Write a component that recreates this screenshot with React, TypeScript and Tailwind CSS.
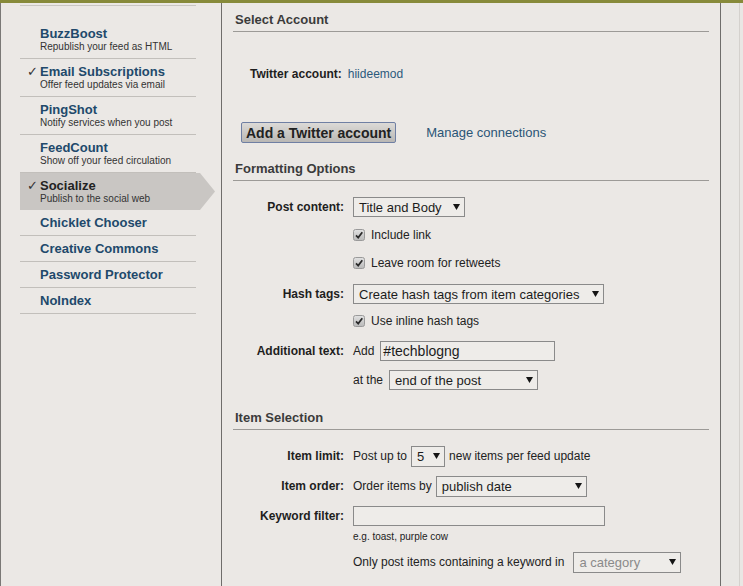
import React from "react";

const sideItems = [
  { title: "BuzzBoost", sub: "Republish your feed as HTML" },
  { title: "Email Subscriptions", sub: "Offer feed updates via email", checked: true },
  { title: "PingShot", sub: "Notify services when you post" },
  { title: "FeedCount", sub: "Show off your feed circulation" },
  { title: "Socialize", sub: "Publish to the social web", checked: true, active: true },
  { title: "Chicklet Chooser" },
  { title: "Creative Commons" },
  { title: "Password Protector" },
  { title: "NoIndex" },
];

function Arrow() {
  return (
    <svg width="7" height="6" viewBox="0 0 7 6" className="shrink-0">
      <polygon points="0,0 7,0 3.5,6" fill="#151515" />
    </svg>
  );
}

function Select({ text, className, muted }: { text: string; className: string; muted?: boolean }) {
  return (
    <div
      className={
        "flex items-center justify-between border border-[#8a8a8a] bg-[#eeece9] pl-[5px] pr-[4px] text-[13px] " +
        (muted ? "text-[#8a8a8a] " : "text-[#1c1c1c] ") +
        className
      }
    >
      <span className="leading-none">{text}</span>
      <Arrow />
    </div>
  );
}

function Checkbox({ label }: { label: string }) {
  return (
    <div className="flex items-center gap-[6px]">
      <svg width="12" height="12" viewBox="0 0 12 12">
        <defs>
          <linearGradient id="cb" x1="0" y1="0" x2="0" y2="1">
            <stop offset="0" stopColor="#e2e2e2" />
            <stop offset="1" stopColor="#b9b9b9" />
          </linearGradient>
        </defs>
        <rect x="0.5" y="0.5" width="11" height="11" rx="2" fill="url(#cb)" stroke="#9a9a9a" />
        <path d="M3 6.3 L5.2 8.6 L9.3 3.2" fill="none" stroke="#2a2a2a" strokeWidth="1.7" />
      </svg>
      <span className="text-[12px]">{label}</span>
    </div>
  );
}

function Row({ label, className, children }: { label?: string; className: string; children: React.ReactNode }) {
  return (
    <div className={"flex items-center " + className}>
      <div className="w-[122px] text-right text-[12px] font-bold text-[#1e1e1e]">{label}</div>
      <div className="ml-[9px] flex items-center">{children}</div>
    </div>
  );
}

function Heading({ text, className }: { text: string; className: string }) {
  return (
    <div className={"mx-[11px] border-b border-[#9c9a97] pb-[3px] pl-[2px] " + className}>
      <h2 className="text-[13px] font-bold leading-[16px] text-[#3b3b3b]">{text}</h2>
    </div>
  );
}

export default function App() {
  return (
    <div className="h-[586px] w-[743px] overflow-hidden bg-[#ebe8e5] font-['Liberation_Sans',Arial,sans-serif] text-[#222]">
      <div className="h-[3px] bg-[#878a3a]" />
      <div className="flex h-[583px]">
        <div className="w-[1px] bg-[#7a7876]" />

        <aside className="w-[220px] pl-[19px] pt-[2px]">
          <div className="w-[176px] border-t border-[#c9c6c2] pt-[15px]">
            {sideItems.map((it) =>
              it.active ? (
                <div
                  key={it.title}
                  className="flex w-[195px] bg-[#c9c6c3] pb-[5px] pt-[5px] [clip-path:polygon(0_0,calc(100%-15px)_0,100%_50%,calc(100%-15px)_100%,0_100%)]"
                >
                  <span className="w-[20px] pl-[7px] text-[13px] leading-[15px] text-[#333]">✓</span>
                  <div>
                    <div className="text-[13px] font-bold leading-[15px] text-[#222]">{it.title}</div>
                    <div className="text-[10px] leading-[12px] text-[#333]">{it.sub}</div>
                  </div>
                </div>
              ) : (
                <div key={it.title} className="flex border-b border-[#c2bfbb] pb-[5px] pt-[5px]">
                  <span className="w-[20px] pl-[7px] text-[13px] leading-[15px] text-[#333]">{it.checked ? "✓" : ""}</span>
                  <div>
                    <div className="text-[13px] font-bold leading-[15px] text-[#21496b]">{it.title}</div>
                    {it.sub && <div className="text-[10px] leading-[12px] text-[#333]">{it.sub}</div>}
                  </div>
                </div>
              )
            )}
          </div>
        </aside>

        <div className="w-[1px] bg-[#6f6d6b]" />

        <main className="w-[498px]">
          <Heading text="Select Account" className="pt-[9px]" />

          <div className="mt-[32px] flex h-[20px] items-center pl-[28px] text-[12px]">
            <span className="font-bold text-[#1e1e1e]">Twitter account:</span>
            <span className="ml-[6px] text-[#2b5a7c]">hiideemod</span>
          </div>

          <div className="mt-[38px] flex h-[21px] items-center pl-[19px]">
            <button className="h-[21px] rounded-[2px] border border-[#6f7fa3] bg-gradient-to-b from-[#dcdad7] to-[#b9b7b4] px-[4px] text-[14px] font-bold leading-none text-[#222]">
              Add a Twitter account
            </button>
            <span className="ml-[30px] text-[13px] text-[#2a5576]">Manage connections</span>
          </div>

          <Heading text="Formatting Options" className="pt-[18px]" />

          <Row label="Post content:" className="mt-[12px] h-[28px]">
            <Select text="Title and Body" className="h-[20px] w-[112px]" />
          </Row>
          <Row className="h-[28px]">
            <Checkbox label="Include link" />
          </Row>
          <Row className="h-[28px]">
            <Checkbox label="Leave room for retweets" />
          </Row>
          <Row label="Hash tags:" className="h-[34px]">
            <Select text="Create hash tags from item categories" className="h-[20px] w-[251px]" />
          </Row>
          <Row className="h-[20px]">
            <Checkbox label="Use inline hash tags" />
          </Row>
          <Row label="Additional text:" className="h-[40px]">
            <span className="text-[12px]">Add</span>
            <div className="ml-[6px] flex h-[20px] w-[175px] items-center border border-[#8a8a8a] bg-[#eeece9] pl-[2px] text-[14px] text-[#1c1c1c]">
              #techblogng
            </div>
          </Row>
          <Row className="h-[18px]">
            <span className="text-[12px]">at the</span>
            <Select text="end of the post" className="ml-[6px] h-[20px] w-[149px]" />
          </Row>

          <Heading text="Item Selection" className="pt-[21px]" />

          <Row label="Item limit:" className="mt-[12px] h-[28px]">
            <span className="text-[12px]">Post up to</span>
            <Select text="5" className="ml-[4px] h-[21px] w-[34px]" />
            <span className="ml-[4px] text-[12px]">new items per feed update</span>
          </Row>
          <Row label="Item order:" className="h-[32px]">
            <span className="text-[12px]">Order items by</span>
            <Select text="publish date" className="ml-[4px] h-[21px] w-[151px]" />
          </Row>
          <Row label="Keyword filter:" className="h-[28px]">
            <div className="h-[20px] w-[252px] border border-[#8a8a8a] bg-[#eeece9]" />
          </Row>
          <Row className="h-[12px]">
            <span className="text-[10px]">e.g. toast, purple cow</span>
          </Row>
          <Row className="h-[40px]">
            <span className="text-[12px]">Only post items containing a keyword in</span>
            <Select text="a category" muted className="ml-[9px] h-[21px] w-[108px]" />
          </Row>
        </main>

        <div className="w-[1px] bg-[#6f6d6b]" />
        <div className="flex flex-1 bg-[#e9e7e4]">
          <div className="ml-[18px] w-[1px] bg-[#d4d1cd]" />
        </div>
      </div>
    </div>
  );
}
